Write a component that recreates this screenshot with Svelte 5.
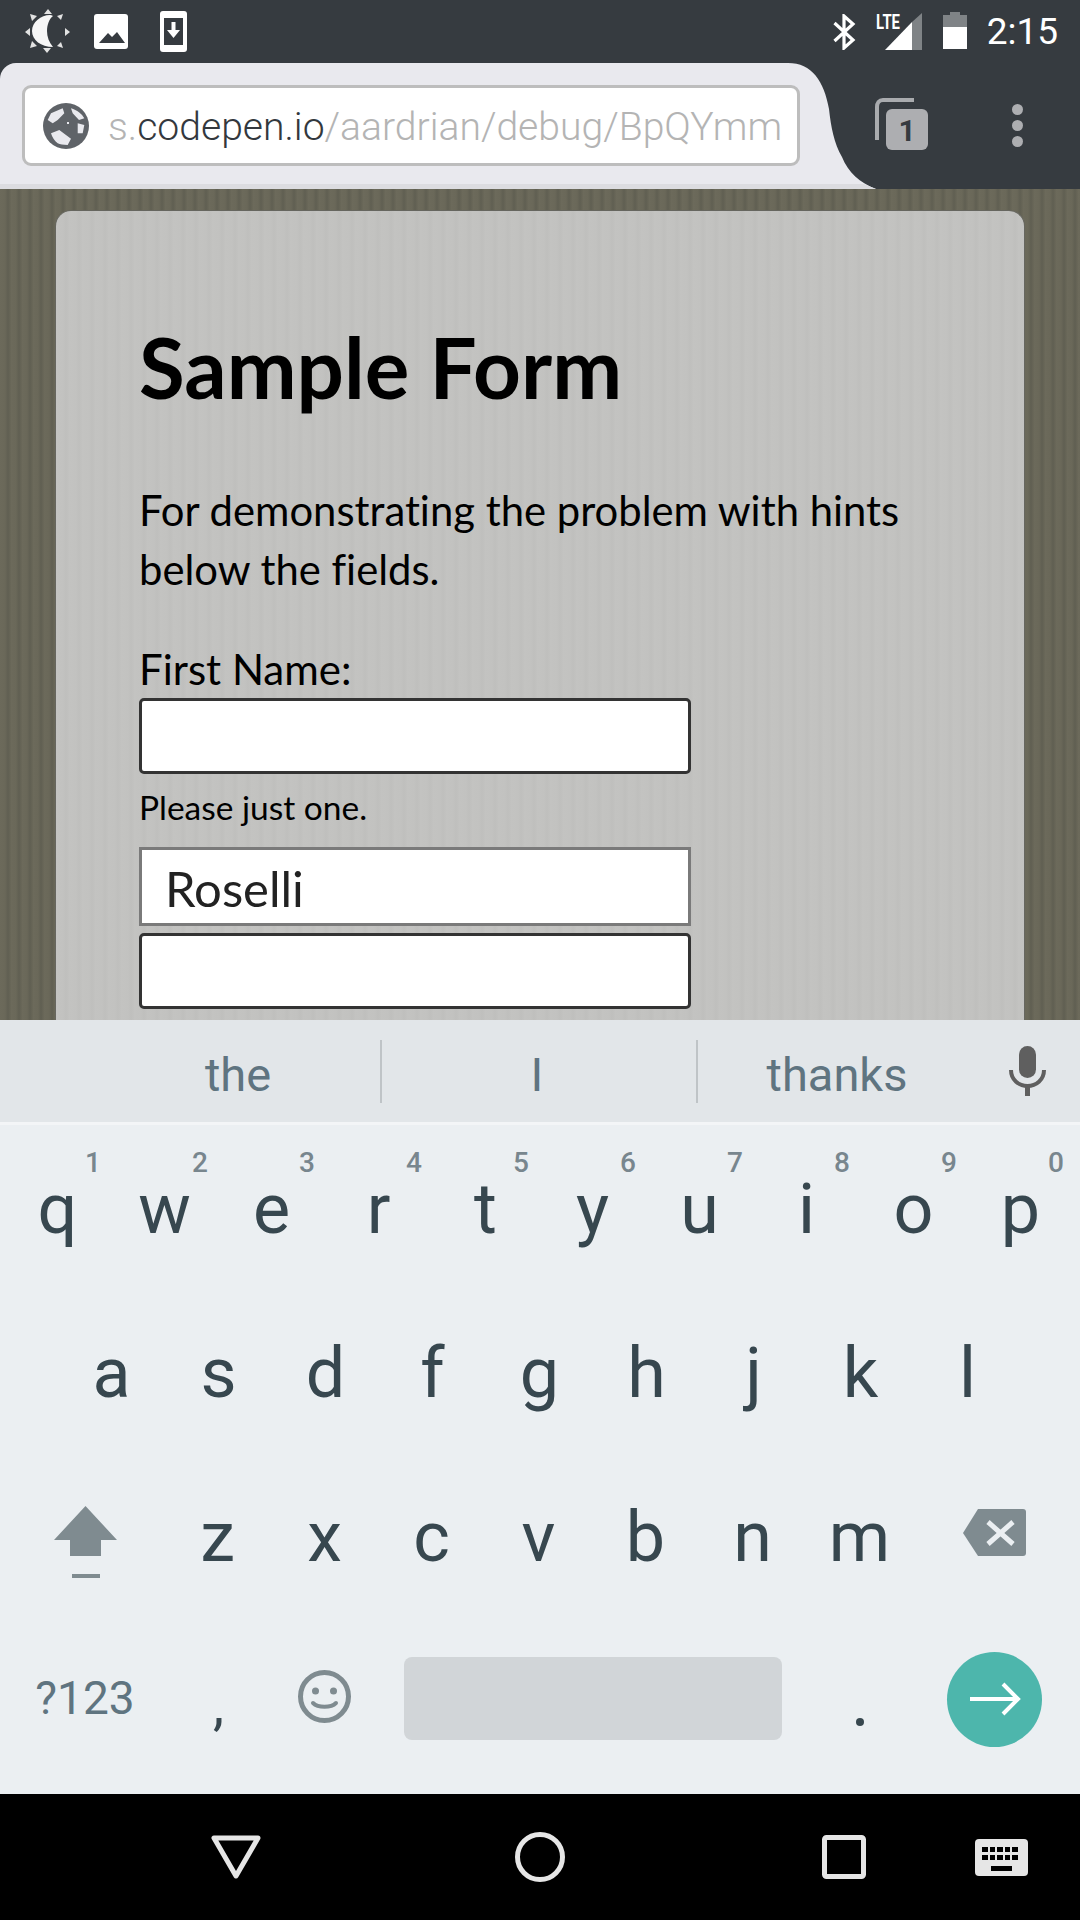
<script>
	const row1 = [['q', 1], ['w', 2], ['e', 3], ['r', 4], ['t', 5], ['y', 6], ['u', 7], ['i', 8], ['o', 9], ['p', 0]];
	const row2 = ['a', 's', 'd', 'f', 'g', 'h', 'j', 'k', 'l'];
	const row3 = ['z', 'x', 'c', 'v', 'b', 'n', 'm'];
</script>

<div class="screen">
	<div class="status">
		<svg class="moon" width="46" height="44" viewBox="0 0 46 44">
			<path fill="#f6f6f6" d="M25 6C16 6 7 13 7 22C7 31 16 38 28 38C24 33 22 28 22 22C22 16 24 10 28 7C27 6.400 26 6 25 6Z" />
			<path fill="#e2e2e2" d="M23 0L27 5H19ZM22 44L18 39H26ZM0 23L5 19V27ZM45 23L40 27V19ZM5 5L12 7L7 12ZM38 5L36 11L32 7ZM5 39L7 32L12 37ZM38 39L32 37L36 33Z" />
		</svg>
		<svg class="pic" width="34" height="35" viewBox="0 0 34 35">
			<rect width="34" height="35" rx="3" fill="#fff" />
			<path fill="#363b40" d="M5 29L14 19L18 23L23 18L31 29Z" />
		</svg>
		<svg class="phone" width="27" height="41" viewBox="0 0 27 41">
			<rect width="27" height="41" rx="3" fill="#fff" />
			<rect x="4" y="7" width="19" height="27" fill="#363b40" />
			<path fill="#fff" d="M11.500 11H15.500V19H20L13.500 27L7 19H11.500Z" />
		</svg>
		<div class="spacer"></div>
		<svg class="bt" width="24" height="36" viewBox="0 0 24 36">
			<path fill="none" stroke="#fff" stroke-width="3.200" d="M1.500 9L20 26L11 34V2L20 10L1.500 27" />
		</svg>
		<svg class="signal" width="46" height="37" viewBox="0 0 46 37">
			<path fill="#7f8386" d="M46 0V37H36V9Z" />
			<path fill="#fff" d="M36 9V37H9Z" />
			<text x="0" y="16" class="lte" textLength="24" lengthAdjust="spacingAndGlyphs">LTE</text>
		</svg>
		<svg class="battery" width="24" height="37" viewBox="0 0 24 37">
			<path fill="#7f8386" d="M7 0H17V3H24V15H0V3H7Z" />
			<rect y="15" width="24" height="22" fill="#fff" />
		</svg>
		<span class="time">2:15</span>
	</div>

	<div class="toolbar">
		<div class="tab">
			<div class="address">
				<svg class="globe" width="46" height="46" viewBox="0 0 46 46">
					<circle cx="23" cy="23" r="23" fill="#5f6368" />
					<path fill="#e9e9ee" d="M4.700 17L8 10.300L19.700 5.300L21.300 10.300L14.700 17L9.700 20.300ZM28 5.300C34 7 39 11 41.300 15.300L36 17L29.700 10.300ZM34.700 20.300L41.300 22L39.700 30.300L34.700 30.300ZM8 30.300L16.300 27L28 35.700L24.700 42C20 42 17 41.500 14.700 40.300C11.500 38 9 34 8 30.300ZM24 19H26V21H24Z" />
				</svg>
				<span class="url"><span class="dim">s.</span>codepen.io<span class="dim">/aardrian/debug/BpQYmm</span></span>
			</div>
		</div>
		<svg class="curve" width="88" height="126" viewBox="0 0 88 126">
			<path fill="#e9e9ee" d="M0 0C24 0 36 18 41 46C43 64 46 80 54 94C60 109 72 120 88 126H0Z" />
			<path fill="#dcdce0" d="M0 121H76L88 126H0Z" />
		</svg>
		<svg class="tabs" width="53" height="52" viewBox="0 0 53 52">
			<path fill="none" stroke="#a9abae" stroke-width="4" d="M2 42V9C2 5 4 2 8 2H39" />
			<rect x="11" y="11" width="42" height="41" rx="6" fill="#adaeb1" />
			<text x="32" y="43" class="count">1</text>
		</svg>
		<div class="dots"><i></i><i></i><i></i></div>
	</div>

	<div class="page">
		<div class="card">
			<h1>Sample Form</h1>
			<p class="intro">For demonstrating the problem with hints below the fields.</p>
			<div class="label">First Name:</div>
			<div class="field"></div>
			<div class="hint">Please just one.</div>
			<div class="field filled">Roselli</div>
			<div class="field"></div>
		</div>
	</div>

	<div class="keyboard">
		<div class="suggest">
			<span class="s1">the</span>
			<i class="sep"></i>
			<span class="s2">I</span>
			<i class="sep"></i>
			<span class="s3">thanks</span>
			<svg class="mic" width="37" height="50" viewBox="0 0 37 50">
				<rect x="10" y="0" width="17" height="32" rx="8.500" fill="#5f5f5f" />
				<path fill="none" stroke="#5f5f5f" stroke-width="4" d="M2 24C2 34 10 40 18.500 40C27 40 35 34 35 24" />
				<rect x="16" y="39" width="5" height="11" fill="#5f5f5f" />
			</svg>
		</div>
		<div class="edge"></div>

		<div class="row first">
			{#each row1 as [letter, num]}
				<div class="key">{letter}<sup>{num}</sup></div>
			{/each}
		</div>
		<div class="row second">
			{#each row2 as letter}
				<div class="key">{letter}</div>
			{/each}
		</div>
		<div class="row third">
			<div class="key">
				<svg class="shift" width="63" height="72" viewBox="0 0 63 72">
					<path fill="#7f8b90" d="M31.500 0L63 34H47V50H16V34H0Z" />
					<rect x="18" y="68" width="28" height="4" fill="#7f8b90" />
				</svg>
			</div>
			{#each row3 as letter}
				<div class="key">{letter}</div>
			{/each}
			<div class="key">
				<svg class="back" width="63" height="47" viewBox="0 0 63 47">
					<path fill="#7f8b90" d="M15 0H60Q63 0 63 3V44Q63 47 60 47H15L0 24Z" />
					<path fill="none" stroke="#ebeff2" stroke-width="5" d="M25 13L50 35M50 13L25 35" />
				</svg>
			</div>
		</div>
		<div class="row fourth">
			<div class="key sym">?123</div>
			<div class="key comma">,</div>
			<div class="key">
				<svg class="smile" width="53" height="53" viewBox="0 0 53 53">
					<circle cx="26.500" cy="26.500" r="24" fill="none" stroke="#7f8b90" stroke-width="5" />
					<circle cx="17.500" cy="21" r="3.500" fill="#7f8b90" />
					<circle cx="35.500" cy="21" r="3.500" fill="#7f8b90" />
					<path fill="none" stroke="#7f8b90" stroke-width="4" stroke-linecap="round" d="M15 33C20 38 33 38 38 33" />
				</svg>
			</div>
			<div class="space"></div>
			<div class="key period"><i></i></div>
			<div class="key">
				<div class="enter">
					<svg width="52" height="34" viewBox="0 0 52 34">
						<path fill="none" stroke="#fff" stroke-width="4" d="M1 17H48M34 2L49 17L34 32" />
					</svg>
				</div>
			</div>
		</div>
	</div>

	<div class="nav">
		<svg width="50" height="44" viewBox="0 0 50 44">
			<path fill="none" stroke="#e6e6e6" stroke-width="5" stroke-linejoin="round" d="M3 3H47L25 41Z" />
		</svg>
		<svg width="50" height="50" viewBox="0 0 50 50">
			<circle cx="25" cy="25" r="22.500" fill="none" stroke="#e6e6e6" stroke-width="5" />
		</svg>
		<svg width="44" height="44" viewBox="0 0 44 44">
			<rect x="2.500" y="2.500" width="39" height="39" rx="2" fill="none" stroke="#e6e6e6" stroke-width="5" />
		</svg>
		<svg width="53" height="37" viewBox="0 0 53 37">
			<rect width="53" height="37" rx="4" fill="#e6e6e6" />
			<path fill="#000" d="M7 8h6v5H7zM15 8h5v5h-5zM22 8h6v5h-6zM30 8h5v5h-5zM37 8h6v5h-6zM7 16h6v5H7zM15 16h5v5h-5zM22 16h6v5h-6zM30 16h5v5h-5zM37 16h6v5h-6zM16 27h21v5H16z" />
		</svg>
	</div>
</div>

<style>
	:global(body) {
		margin: 0;
	}

	.screen {
		width: 1080px;
		height: 1920px;
		display: flex;
		flex-direction: column;
		overflow: hidden;
		font-family: Roboto, sans-serif;
		background: #363b40;
	}

	.status {
		height: 63px;
		display: flex;
		align-items: flex-start;
		flex: none;
		color: #fff;
	}

	.moon {
		margin: 9px 0 0 25px;
	}

	.pic {
		margin: 14px 0 0 23px;
	}

	.phone {
		margin: 11px 0 0 32px;
	}

	.spacer {
		flex: 1;
	}

	.bt {
		margin: 14px 0 0 0;
	}

	.signal {
		margin: 13px 0 0 19px;
	}

	.lte {
		font: 700 20px "Liberation Sans Narrow", Roboto, sans-serif;
		fill: #fff;
	}

	.battery {
		margin: 12px 0 0 21px;
	}

	.time {
		font-size: 37px;
		line-height: 63px;
		margin: 0 22px 0 20px;
	}

	.toolbar {
		height: 126px;
		flex: none;
		display: flex;
		align-items: flex-start;
	}

	.tab {
		width: 788px;
		height: 99px;
		flex: none;
		position: relative;
		z-index: 1;
		background: #e9e9ee;
		border-bottom: 5px solid #dcdce0;
		border-top-left-radius: 16px;
		padding-top: 22px;
	}

	.address {
		width: 778px;
		height: 81px;
		margin-left: 22px;
		box-sizing: border-box;
		background: #fff;
		border: 3px solid #bdbdbd;
		border-radius: 9px;
		display: flex;
		align-items: center;
	}

	.globe {
		margin-left: 18px;
		flex: none;
	}

	.url {
		margin-left: 19px;
		padding-top: 2px;
		font-size: 39.100px;
		font-weight: 300;
		color: #33383d;
		white-space: nowrap;
	}

	.dim {
		color: #b4b4b4;
	}

	.curve {
		flex: none;
	}

	.tabs {
		flex: none;
		margin: 35px 0 0 -1px;
	}

	.count {
		font: 700 30px Roboto, sans-serif;
		fill: #363b40;
		text-anchor: middle;
	}

	.dots {
		display: flex;
		flex-direction: column;
		gap: 5px;
		margin: 41px 0 0 84px;
	}

	.dots i {
		display: block;
		width: 11px;
		height: 11px;
		border-radius: 50%;
		background: #adaeb1;
	}

	.page {
		flex: 1;
		min-height: 0;
		overflow: hidden;
		padding: 21px 55px 0;
		background: repeating-linear-gradient(90deg, #6c6a5b 0, #6a6859 5px, #605f52 8px, #6a6859 11px);
	}

	.card {
		height: 900px;
		box-sizing: border-box;
		padding: 111px 83px 0;
		border: 1px solid #66665f;
		border-bottom: 0;
		border-radius: 16px 16px 0 0;
		background: repeating-linear-gradient(90deg, #c3c3c1 0, #c2c2c0 7px, #bfbfbd 10px, #c2c2c0 13px);
		font-family: Lato, sans-serif;
		font-variant-ligatures: none;
		color: #000;
	}

	h1 {
		margin: 0;
		font-size: 83.500px;
		line-height: 90px;
		font-weight: 700;
	}

	.intro {
		margin: 69px 0 0;
		font-size: 41.800px;
		line-height: 59px;
		width: 800px;
	}

	.label {
		margin-top: 46px;
		font-size: 42px;
		line-height: 48px;
		margin-bottom: 5px;
	}

	.field {
		width: 552px;
		height: 76px;
		box-sizing: border-box;
		background: #fff;
		border: 3px solid #333;
		border-radius: 5px;
	}

	.hint {
		font-size: 33.500px;
		line-height: 40px;
		margin: 13px 0 20px;
	}

	.filled {
		height: 79px;
		margin-bottom: 7px;
		border-color: #7a7a7a;
		border-radius: 0;
		padding-left: 23px;
		font-size: 49px;
		line-height: 77px;
		color: #222;
	}

	.keyboard {
		flex: none;
		height: 774px;
		background: #ebeff2;
		color: #37474f;
	}

	.suggest {
		height: 102px;
		background: #e2e6e9;
		display: grid;
		grid-template-columns: 380px 2px 314px 2px 1fr;
		align-items: center;
		position: relative;
		font-size: 47px;
		color: #5f7480;
	}

	.suggest span {
		text-align: center;
		padding-top: 6px;
	}

	.sep {
		height: 63px;
		background: #bfc4c7;
	}

	.s1 {
		padding-left: 96px;
	}

	.s2 {
		padding-right: 4px;
	}

	.s3 {
		padding-right: 104px;
	}

	.mic {
		position: absolute;
		left: 1009px;
		top: 26px;
	}

	.edge {
		height: 3px;
		background: #f3f5f7;
	}

	.row {
		display: grid;
		align-items: center;
		height: 164px;
	}

	.first {
		grid-template-columns: repeat(10, 107px);
		padding-left: 4px;
		margin-top: 2px;
	}

	.second {
		grid-template-columns: repeat(9, 107px);
		padding-left: 58px;
	}

	.third {
		grid-template-columns: 164px repeat(7, 107px) 162px;
	}

	.fourth {
		grid-template-columns: 164px 107px 107px 404px 156px 113px;
		height: 160px;
	}

	.key {
		position: relative;
		display: flex;
		align-items: center;
		justify-content: center;
		font-size: 70px;
		line-height: 90px;
	}

	sup {
		position: absolute;
		top: -17px;
		right: 10px;
		font-size: 28px;
		line-height: 32px;
		font-weight: 500;
		color: #78868e;
	}

	.shift {
		margin: 9px 0 0 6px;
	}

	.back {
		margin-bottom: 9px;
	}

	.sym {
		font-size: 46px;
		color: #5f7480;
		padding-left: 6px;
		padding-bottom: 2px;
	}

	.comma {
		font-size: 56px;
		padding-top: 12px;
		padding-left: 2px;
	}

	.smile {
		margin-bottom: 5px;
	}

	.space {
		height: 83px;
		border-radius: 8px;
		background: #d1d5d8;
		margin: 0 0 2px 26px;
	}

	.period i {
		width: 8px;
		height: 8px;
		border-radius: 50%;
		background: #37474f;
		margin-top: 46px;
	}

	.enter {
		width: 95px;
		height: 95px;
		border-radius: 50%;
		background: #4db6ac;
		display: flex;
		align-items: center;
		justify-content: center;
	}

	.nav {
		flex: none;
		height: 126px;
		background: #000;
		display: flex;
		align-items: center;
		padding-left: 211px;
	}

	.nav svg:nth-child(2) {
		margin-left: 254px;
	}

	.nav svg:nth-child(3) {
		margin-left: 257px;
	}

	.nav svg:nth-child(4) {
		margin-left: 109px;
	}
</style>
